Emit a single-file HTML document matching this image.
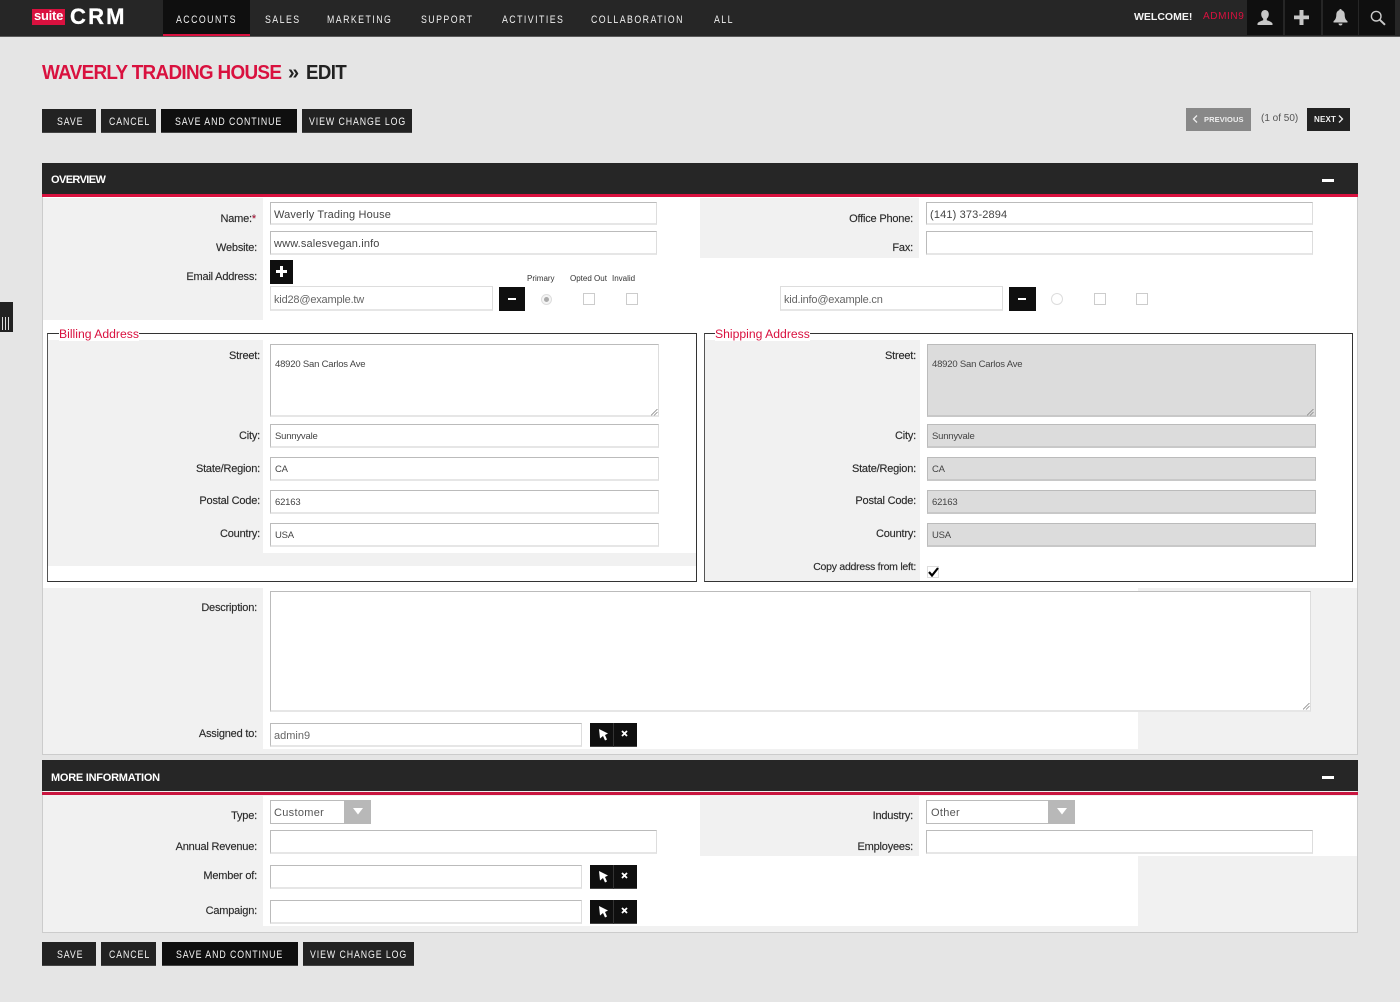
<!DOCTYPE html>
<html><head><meta charset="utf-8"><title>Edit</title>
<style>
html,body{margin:0;padding:0}
body{width:1400px;height:1002px;background:#e5e5e5;position:relative;overflow:hidden;font-family:"Liberation Sans",sans-serif;color:#333}
div,span,a{position:absolute;box-sizing:border-box}
.t{white-space:nowrap;line-height:14px}
.lb{white-space:nowrap;line-height:14px;font-size:11px;color:#2b2b2b;text-align:right;-webkit-text-stroke:.15px #2b2b2b;margin-top:1px;letter-spacing:-.2px}
.nav{color:#f0f0f0;font-size:11px;letter-spacing:1.8px;top:13px;line-height:14px;white-space:nowrap;transform:scaleX(.8);transform-origin:0 0}
.btn{background:#222;height:24px;border-bottom:1px solid #444}
.bt{color:#f3f3f3;font-size:11px;letter-spacing:1.13px;line-height:14px;white-space:nowrap;transform:scaleX(.8);transform-origin:0 0}
.blk{background:#0f0f0f}
.in{background:#fff;border:1px solid #bbb;border-bottom:2px solid #e6e6e6;border-right-color:#ddd;font-size:11px;color:#444;padding-left:3px;line-height:24px;white-space:nowrap;letter-spacing:.15px}
.ro{background:#dcdcdc;border-color:#bbb;border-bottom-color:#c8c8c8;color:#444}
.a{font-size:9.5px;letter-spacing:-.2px;padding-left:4px}
.g{background:#f1f1f1}
.w{background:#fff}
.hd{background:#262626;left:42px;width:1316px;height:31px}
.red{background:#d9113f;left:42px;width:1316px;height:3px}
.ht{color:#fff;font-size:11px;font-weight:bold;left:51px;line-height:14px;white-space:nowrap}
.mn{background:#fff;width:12px;height:3px;left:1322px}
.chk{background:#fff;border:1px solid #ccc;width:12px;height:12px}
.sb{background:#0f0f0f;height:24px;width:47px;left:590px;border-bottom:1px solid #444}
.sb i{position:absolute;left:23px;top:0;width:1px;height:24px;background:#333}
svg{position:absolute;display:block}
.leg{color:#d9113f;font-size:12.2px;background:#fff;line-height:14px;white-space:nowrap;top:327px}
.fs{border:1px solid #333;border-left-color:#555;background:#fff}
</style></head><body>

<!-- nav -->
<div style="left:0;top:0;width:1400px;height:36px;background:#262626"></div>
<div style="left:0;top:36px;width:1400px;height:1px;background:#5a5a5a"></div>
<div style="left:32px;top:9px;width:33px;height:16px;background:#d9113f"></div>
<div class="t" style="left:34px;top:9px;color:#fff;font-size:13px;font-weight:bold;letter-spacing:-.25px">suite</div>
<div class="t" style="left:70px;top:6px;color:#fff;font-size:22px;font-weight:bold;line-height:22px;letter-spacing:2.2px;-webkit-text-stroke:.3px #fff">CRM</div>
<div style="left:163px;top:0;width:87px;height:36px;background:#0f0f0f"></div>
<div style="left:163px;top:34px;width:87px;height:2px;background:#d9113f"></div>
<div class="nav" style="left:176px">ACCOUNTS</div>
<div class="nav" style="left:265px">SALES</div>
<div class="nav" style="left:327px">MARKETING</div>
<div class="nav" style="left:421px">SUPPORT</div>
<div class="nav" style="left:502px">ACTIVITIES</div>
<div class="nav" style="left:591px">COLLABORATION</div>
<div class="nav" style="left:714px">ALL</div>
<div class="t" style="left:1134px;top:10px;color:#f5f5f5;font-size:10.5px;font-weight:bold;letter-spacing:0">WELCOME!</div>
<div class="t" style="left:1203px;top:10px;color:#d9113f;font-size:10px;letter-spacing:.6px">ADMIN9</div>
<div class="blk" style="left:1247px;top:0;width:36px;height:35px"></div>
<div class="blk" style="left:1285px;top:0;width:36px;height:35px"></div>
<div class="blk" style="left:1323px;top:0;width:35px;height:35px"></div>
<div class="blk" style="left:1359px;top:0;width:36px;height:35px"></div>
<svg style="left:1257px;top:10px" width="16" height="16" viewBox="0 0 16 16"><path d="M8 0c2.400 0 3.800 1.900 3.800 4.300 0 1.900-.9 3.600-2 4.500v1.500c2.400.8 4.900 1.700 5.700 3.200v1.500H.5v-1.500c.8-1.500 3.300-2.400 5.700-3.200V8.800c-1.100-.9-2-2.600-2-4.500C4.200 1.900 5.600 0 8 0z" fill="#c8c8c8"/></svg>
<svg style="left:1294px;top:10px" width="15" height="15" viewBox="0 0 15 15"><path d="M5.500 0h4v5.500H15v3.800H9.500V15h-4V9.300H0V5.500h5.500z" fill="#c8c8c8"/></svg>
<svg style="left:1333px;top:9px" width="15" height="17" viewBox="0 0 15 17"><path d="M7.500 0c.8 0 1.200.6 1.200 1.300 2 .6 3 2.300 3 4.500 0 3 .9 5 2.800 6.500v1.200H.5v-1.200c1.900-1.500 2.800-3.500 2.800-6.500 0-2.200 1-3.900 3-4.500C6.300.6 6.700 0 7.500 0zM5.500 14.500h4c0 1.200-.9 2-2 2s-2-.8-2-2z" fill="#c8c8c8"/></svg>
<svg style="left:1370px;top:10px" width="16" height="16" viewBox="0 0 16 16"><circle cx="6.200" cy="6.200" r="4.800" fill="none" stroke="#c8c8c8" stroke-width="1.400"/><path d="M9.800 9.800L15 14.800" stroke="#c8c8c8" stroke-width="2" fill="none"/></svg>

<!-- title -->
<div class="t" style="left:42px;top:61px;font-size:20px;line-height:24px;font-weight:bold;color:#d9113f;letter-spacing:-.72px;transform:scaleX(.944);transform-origin:0 0">WAVERLY TRADING HOUSE</div>
<div class="t" style="left:288px;top:61px;font-size:20px;line-height:24px;font-weight:bold;color:#222">»</div>
<div class="t" style="left:306px;top:61px;font-size:20px;line-height:24px;font-weight:bold;color:#222;letter-spacing:-.6px;transform:scaleX(.93);transform-origin:0 0">EDIT</div>

<!-- top buttons -->
<div class="btn" style="left:42px;top:109px;width:54px"></div><div class="bt" style="left:57px;top:115px">SAVE</div>
<div class="btn" style="left:101px;top:109px;width:55px"></div><div class="bt" style="left:109px;top:115px">CANCEL</div>
<div class="btn blk" style="left:161px;top:109px;width:136px"></div><div class="bt" style="left:175px;top:115px">SAVE AND CONTINUE</div>
<div class="btn" style="left:302px;top:109px;width:110px"></div><div class="bt" style="left:309px;top:115px">VIEW CHANGE LOG</div>

<div style="left:1186px;top:108px;width:65px;height:23px;background:#888"></div>
<svg style="left:1192px;top:115px" width="7" height="8" viewBox="0 0 7 8"><path d="M5 .5L1.500 4 5 7.500" fill="none" stroke="#eee" stroke-width="1.300"/></svg>
<div class="t" style="left:1204px;top:113px;color:#eee;font-size:7.5px;font-weight:bold;letter-spacing:.1px">PREVIOUS</div>
<div class="t" style="left:1261px;top:112px;font-size:10px;color:#555">(1 of 50)</div>
<div style="left:1307px;top:108px;width:43px;height:23px;background:#222"></div>
<div class="t" style="left:1314px;top:113px;color:#f3f3f3;font-size:8px;font-weight:bold;letter-spacing:.2px">NEXT</div>
<svg style="left:1337px;top:115px" width="7" height="8" viewBox="0 0 7 8"><path d="M2 .5L5.500 4 2 7.500" fill="none" stroke="#eee" stroke-width="1.300"/></svg>

<!-- side tab -->
<div style="left:0;top:302px;width:13px;height:30px;background:#222"></div>
<div style="left:2px;top:317px;width:1px;height:13px;background:#ddd"></div>
<div style="left:5px;top:317px;width:1px;height:13px;background:#ddd"></div>
<div style="left:8px;top:317px;width:1px;height:13px;background:#ddd"></div>

<!-- overview panel -->
<div class="w" style="left:42px;top:163px;width:1316px;height:592px;border:1px solid #ccc;border-top:0"></div>
<div class="hd" style="top:163px"></div>
<div class="red" style="top:194px"></div>
<div class="ht" style="top:173px;letter-spacing:-.6px">OVERVIEW</div>
<div class="mn" style="top:179px"></div>

<div class="g" style="left:43px;top:198px;width:220px;height:122px"></div>
<div class="g" style="left:700px;top:198px;width:219px;height:60px"></div>

<div class="lb" style="right:1144px;top:211px">Name:<span style="position:static;color:#d9113f">*</span></div>
<div class="lb" style="right:1143px;top:240px">Website:</div>
<div class="lb" style="right:1143px;top:269px">Email Address:</div>
<div class="lb" style="right:487px;top:211px">Office Phone:</div>
<div class="lb" style="right:487px;top:240px">Fax:</div>

<div class="in" style="left:270px;top:202px;width:387px;height:23px">Waverly Trading House</div>
<div class="in" style="left:270px;top:231px;width:387px;height:24px">www.salesvegan.info</div>
<div class="in" style="left:926px;top:202px;width:387px;height:23px">(141) 373-2894</div>
<div class="in" style="left:926px;top:231px;width:387px;height:24px"></div>

<div class="blk" style="left:270px;top:260px;width:23px;height:24px"></div>
<svg style="left:276px;top:266px" width="11" height="11" viewBox="0 0 11 11"><path d="M4 0h3v4h4v3H7v4H4V7H0V4h4z" fill="#fff"/></svg>
<div class="t" style="left:527px;top:272px;font-size:8px;color:#333">Primary</div>
<div class="t" style="left:570px;top:272px;font-size:8px;color:#333">Opted Out</div>
<div class="t" style="left:612px;top:272px;font-size:8px;color:#333">Invalid</div>

<div class="in" style="left:270px;top:286px;width:223px;height:25px;border-color:#ddd;border-bottom-color:#e6e6e6;color:#666;line-height:26px;letter-spacing:-.19px">kid28@example.tw</div>
<div class="blk" style="left:499px;top:287px;width:26px;height:24px"></div>
<div style="left:508px;top:298px;width:8px;height:2px;background:#fff"></div>
<div style="left:541px;top:294px;width:11px;height:11px;border:1px solid #ddd;border-radius:50%;background:#f4f4f4"></div>
<div style="left:544px;top:297px;width:5px;height:5px;border-radius:50%;background:#aaa"></div>
<div class="chk" style="left:583px;top:293px"></div>
<div class="chk" style="left:626px;top:293px"></div>

<div class="in" style="left:780px;top:286px;width:223px;height:25px;border-color:#ddd;border-bottom-color:#e6e6e6;color:#666;line-height:26px;letter-spacing:-.19px">kid.info@example.cn</div>
<div class="blk" style="left:1009px;top:287px;width:27px;height:24px"></div>
<div style="left:1018px;top:298px;width:8px;height:2px;background:#fff"></div>
<div style="left:1051px;top:293px;width:12px;height:12px;border:1px solid #ddd;border-radius:50%;background:#fff"></div>
<div class="chk" style="left:1094px;top:293px"></div>
<div class="chk" style="left:1136px;top:293px"></div>

<!-- billing -->
<div class="fs" style="left:47px;top:333px;width:650px;height:249px"></div>
<div class="g" style="left:48px;top:340px;width:215px;height:213px"></div>
<div class="g" style="left:48px;top:553px;width:648px;height:13px"></div>
<div class="leg" style="left:59px">Billing Address</div>
<div class="lb" style="right:1140px;top:348px">Street:</div>
<div class="lb" style="right:1140px;top:428px">City:</div>
<div class="lb" style="right:1140px;top:461px">State/Region:</div>
<div class="lb" style="right:1140px;top:493px">Postal Code:</div>
<div class="lb" style="right:1140px;top:526px">Country:</div>
<div class="in a" style="left:270px;top:344px;width:389px;height:73px;line-height:14px;padding-top:13px">48920 San Carlos Ave</div>
<div class="in a" style="left:270px;top:424px;width:389px;height:24px">Sunnyvale</div>
<div class="in a" style="left:270px;top:457px;width:389px;height:24px">CA</div>
<div class="in a" style="left:270px;top:490px;width:389px;height:24px">62163</div>
<div class="in a" style="left:270px;top:523px;width:389px;height:24px">USA</div>
<svg style="left:651px;top:409px" width="7" height="7" viewBox="0 0 7 7"><path d="M6.500 0L0 6.500M6.500 3L3 6.500" stroke="#888" stroke-width=".8"/></svg>

<!-- shipping -->
<div class="fs" style="left:704px;top:333px;width:649px;height:249px"></div>
<div class="g" style="left:705px;top:340px;width:215px;height:241px"></div>
<div class="leg" style="left:715px">Shipping Address</div>
<div class="lb" style="right:484px;top:348px">Street:</div>
<div class="lb" style="right:484px;top:428px">City:</div>
<div class="lb" style="right:484px;top:461px">State/Region:</div>
<div class="lb" style="right:484px;top:493px">Postal Code:</div>
<div class="lb" style="right:484px;top:526px">Country:</div>
<div class="lb" style="right:484px;top:559px;font-size:10.5px;letter-spacing:-.25px">Copy address from left:</div>
<div class="in a ro" style="left:927px;top:344px;width:389px;height:73px;line-height:14px;padding-top:13px">48920 San Carlos Ave</div>
<div class="in a ro" style="left:927px;top:424px;width:389px;height:24px">Sunnyvale</div>
<div class="in a ro" style="left:927px;top:457px;width:389px;height:24px">CA</div>
<div class="in a ro" style="left:927px;top:490px;width:389px;height:24px">62163</div>
<div class="in a ro" style="left:927px;top:523px;width:389px;height:24px">USA</div>
<svg style="left:1307px;top:409px" width="7" height="7" viewBox="0 0 7 7"><path d="M6.500 0L0 6.500M6.500 3L3 6.500" stroke="#888" stroke-width=".8"/></svg>
<div class="chk" style="left:927px;top:566px;border-color:#ddd"></div>
<svg style="left:928px;top:567px" width="11" height="10" viewBox="0 0 11 10"><path d="M1 5l3 3.500L10 1" fill="none" stroke="#000" stroke-width="2.200"/></svg>

<!-- description -->
<div class="g" style="left:43px;top:588px;width:220px;height:166px"></div>
<div class="g" style="left:1138px;top:588px;width:219px;height:166px"></div>
<div class="g" style="left:263px;top:749px;width:875px;height:5px"></div>
<div class="lb" style="right:1143px;top:600px">Description:</div>
<div class="lb" style="right:1143px;top:726px">Assigned to:</div>
<div class="in" style="left:270px;top:591px;width:1041px;height:121px"></div>
<svg style="left:1303px;top:703px" width="7" height="7" viewBox="0 0 7 7"><path d="M6.500 0L0 6.500M6.500 3L3 6.500" stroke="#888" stroke-width=".8"/></svg>
<div class="in" style="left:270px;top:723px;width:312px;height:24px;color:#666;letter-spacing:0">admin9</div>
<div class="sb" style="top:723px"><i></i></div>
<svg style="left:598px;top:729px" width="11" height="12" viewBox="0 0 11 12"><path d="M1 0l9 4.500-3 1.500 2 4.500-2 1-2-4.500L2 9.500z" fill="#fff"/></svg>
<svg style="left:621px;top:730px" width="7" height="7" viewBox="0 0 7 7"><path d="M1 1l5 5M6 1L1 6" stroke="#fff" stroke-width="1.800"/></svg>

<!-- more info panel -->
<div class="g" style="left:42px;top:760px;width:1316px;height:173px;border:1px solid #ccc;border-top:0"></div>
<div class="hd" style="top:760px"></div>
<div class="red" style="top:792px;background:#c9153f"></div>
<div class="ht" style="top:771px;letter-spacing:-.25px">MORE INFORMATION</div>
<div class="mn" style="top:776px"></div>
<div class="w" style="left:263px;top:796px;width:437px;height:60px"></div>
<div class="w" style="left:919px;top:796px;width:438px;height:60px"></div>
<div class="w" style="left:263px;top:856px;width:875px;height:70px"></div>
<div class="lb" style="right:1143px;top:808px">Type:</div>
<div class="lb" style="right:1143px;top:839px">Annual Revenue:</div>
<div class="lb" style="right:1143px;top:868px">Member of:</div>
<div class="lb" style="right:1143px;top:903px">Campaign:</div>
<div class="lb" style="right:487px;top:808px">Industry:</div>
<div class="lb" style="right:487px;top:839px">Employees:</div>

<div class="in" style="left:270px;top:800px;width:101px;height:24px;border-bottom:1px solid #bbb;color:#555;letter-spacing:.3px">Customer</div>
<div style="left:344px;top:800px;width:27px;height:24px;background:#b8b8b8"></div>
<svg style="left:353px;top:808px" width="10" height="7" viewBox="0 0 10 7"><path d="M0 0h10L5 6.500z" fill="#fff"/></svg>
<div class="in" style="left:926px;top:800px;width:149px;height:24px;border-bottom:1px solid #bbb;color:#555;padding-left:4px;letter-spacing:.3px">Other</div>
<div style="left:1048px;top:800px;width:27px;height:24px;background:#b8b8b8"></div>
<svg style="left:1057px;top:808px" width="10" height="7" viewBox="0 0 10 7"><path d="M0 0h10L5 6.500z" fill="#fff"/></svg>

<div class="in" style="left:270px;top:830px;width:387px;height:24px"></div>
<div class="in" style="left:926px;top:830px;width:387px;height:24px"></div>
<div class="in" style="left:270px;top:865px;width:312px;height:24px"></div>
<div class="in" style="left:270px;top:900px;width:312px;height:24px"></div>
<div class="sb" style="top:865px"><i></i></div>
<svg style="left:598px;top:871px" width="11" height="12" viewBox="0 0 11 12"><path d="M1 0l9 4.500-3 1.500 2 4.500-2 1-2-4.500L2 9.500z" fill="#fff"/></svg>
<svg style="left:621px;top:872px" width="7" height="7" viewBox="0 0 7 7"><path d="M1 1l5 5M6 1L1 6" stroke="#fff" stroke-width="1.800"/></svg>
<div class="sb" style="top:900px"><i></i></div>
<svg style="left:598px;top:906px" width="11" height="12" viewBox="0 0 11 12"><path d="M1 0l9 4.500-3 1.500 2 4.500-2 1-2-4.500L2 9.500z" fill="#fff"/></svg>
<svg style="left:621px;top:907px" width="7" height="7" viewBox="0 0 7 7"><path d="M1 1l5 5M6 1L1 6" stroke="#fff" stroke-width="1.800"/></svg>

<!-- bottom buttons -->
<div class="btn" style="left:42px;top:942px;width:54px"></div><div class="bt" style="left:57px;top:948px">SAVE</div>
<div class="btn" style="left:101px;top:942px;width:55px"></div><div class="bt" style="left:109px;top:948px">CANCEL</div>
<div class="btn blk" style="left:162px;top:942px;width:136px"></div><div class="bt" style="left:176px;top:948px">SAVE AND CONTINUE</div>
<div class="btn" style="left:303px;top:942px;width:111px"></div><div class="bt" style="left:310px;top:948px">VIEW CHANGE LOG</div>
</body></html>
